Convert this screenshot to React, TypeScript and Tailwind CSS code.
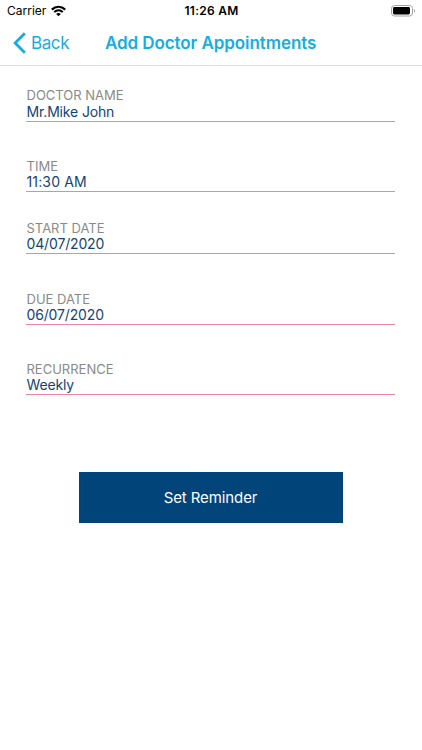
type FieldProps = {
  label: string;
  value: string;
  labelClass?: string;
  valueClass?: string;
  className?: string;
};

function StatusBar() {
  return (
    <div className="grid h-[22px] grid-cols-3 items-center pl-[7px] pr-[6px] text-black">
      <div className="flex items-center gap-[5px]">
        <span className="text-[12px] leading-[22px]">Carrier</span>
        <svg width="15" height="12" viewBox="0 0 15 11" fill="none" stroke="currentColor">
          <path d="M0.8 4.1C4.6 0.3 10.4 0.3 14.2 4.1" strokeWidth="2.2" />
          <path d="M3.2 6.6C5.6 4.2 9.4 4.2 11.8 6.6" strokeWidth="2" />
          <path d="M7.5 10.8L5.1 8.4C6.4 7.1 8.6 7.1 9.9 8.4Z" fill="currentColor" stroke="none" />
        </svg>
      </div>
      <span className="text-center text-[12px] font-semibold leading-[22px] tracking-[0.25px]">11:26 AM</span>
      <svg className="justify-self-end" width="25" height="12" viewBox="0 0 25 12">
        <rect x="0.5" y="0.5" width="21" height="10.5" rx="3" fill="none" stroke="#a3a3a3" />
        <rect x="2" y="2" width="17" height="7.5" rx="1.4" fill="#000" />
        <path d="M23 4C24.5 4.6 24.5 7 23 7.6Z" fill="#a3a3a3" />
      </svg>
    </div>
  );
}

function NavBar() {
  return (
    <div className="flex h-[44px] items-center border-b border-[#dcdcdc] pb-px pl-[13px] text-[#17addf]">
      <button className="flex w-[92px] items-center gap-[5px]">
        <svg width="13" height="22" viewBox="0 0 13 22" fill="none" stroke="currentColor" strokeWidth="2.8">
          <path d="M11.8 1.2L2.1 11L11.8 20.8" />
        </svg>
        <span className="text-[17px] leading-[22px] tracking-[-0.4px]">Back</span>
      </button>
      <h1 className="whitespace-nowrap text-[17px] font-semibold leading-[22px] tracking-[-0.08px]">
        Add Doctor Appointments
      </h1>
    </div>
  );
}

function Field({ label, value, labelClass = "leading-4", valueClass = "", className = "" }: FieldProps) {
  return (
    <div className={`border-b border-[#ea86a0] ${className}`}>
      <div className={`h-4 whitespace-nowrap pl-[0.5px] text-[13px] text-[#8a8a8a] ${labelClass}`}>
        {label}
      </div>
      <div className={`h-[17px] whitespace-nowrap pl-[0.5px] text-[14px] leading-4 text-[#124478] ${valueClass}`}>
        {value}
      </div>
    </div>
  );
}

export default function App() {
  return (
    <div className="h-[750px] w-[422px] overflow-hidden bg-white font-['Inter','Liberation_Sans',sans-serif]">
      <StatusBar />
      <NavBar />
      <form className="pl-[26px] pr-[27px] pt-[22px]">
        <Field label="DOCTOR NAME" value="Mr.Mike John" labelClass="leading-[14px]" valueClass="tracking-[-0.15px]" />
        <Field className="mt-9" label="TIME" value="11:30 AM" valueClass="tracking-[0.15px]" />
        <Field className="mt-7" label="START DATE" value="04/07/2020" valueClass="tracking-[-0.15px]" />
        <Field className="mt-[37px]" label="DUE DATE" value="06/07/2020" valueClass="tracking-[-0.15px]" />
        <Field className="mt-9" label="RECURRENCE" value="Weekly" valueClass="tracking-[-0.15px]" />
      </form>
      <button className="mt-[77px] ml-[79px] block h-[51px] w-[264px] bg-[#004479] pr-px pt-0.5 text-[15px] tracking-[-0.1px] text-white">
        Set Reminder
      </button>
    </div>
  );
}
